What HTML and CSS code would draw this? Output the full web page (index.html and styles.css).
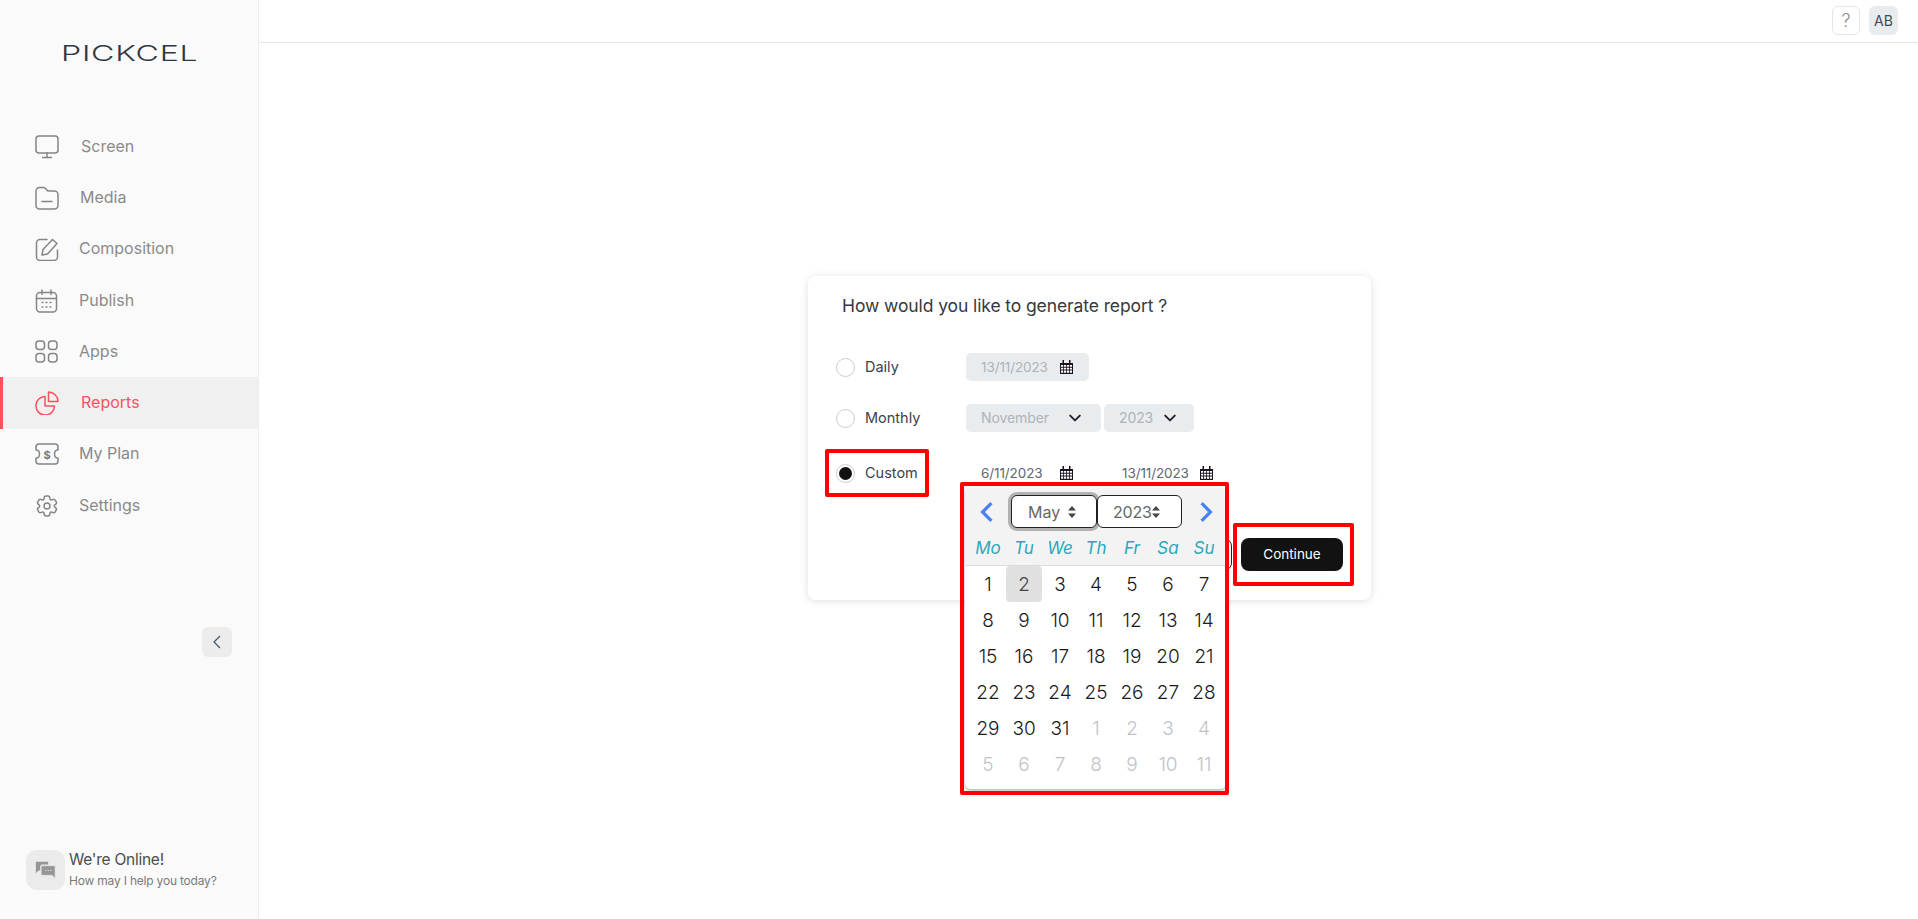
FILE: index.html
```html
<!DOCTYPE html>
<html lang="en">
<head>
<meta charset="utf-8">
<title>Pickcel Reports</title>
<link rel="stylesheet" href="styles.css">
</head>
<body>
<aside class="sidebar">
  <div class="logo"><span class="logo-word">PICKCEL</span></div>
  <nav class="nav">
    <a class="nav-item wide"><svg class="nav-icon" viewBox="0 0 24 24"><rect x="1" y="1" width="22" height="17" rx="3"/><path d="M12 18v4M7.500 22.500h9"/></svg>Screen</a>
    <a class="nav-item"><svg class="nav-icon media-icon" viewBox="0 0 24 24"><path d="M1 5a3.500 3.500 0 0 1 3.500-3.500h4c1.500 0 2 1 2.800 2 .8 1.200 1.500 1.500 2.700 1.500H19.500A3.500 3.500 0 0 1 23 8.500v11a3.500 3.500 0 0 1-3.500 3.500h-15A3.500 3.500 0 0 1 1 19.500z"/><path d="M7 15.500h10"/></svg>Media</a>
    <a class="nav-item"><svg class="nav-icon" viewBox="0 0 24 24"><path d="M12 2.500H5a3.500 3.500 0 0 0-3.500 3.500v14A3.500 3.500 0 0 0 5 23.500h14a3.500 3.500 0 0 0 3.500-3.500v-7"/><path d="M17.500 2.500l4.500 4-9.500 10.500-5.500 1 1-5.500z"/></svg>Composition</a>
    <a class="nav-item"><svg class="nav-icon" viewBox="0 0 24 24"><rect x="1.500" y="3.500" width="20" height="19.500" rx="3.500"/><path d="M1.500 9.500h20M7 1v4.500M16 1v4.500"/><path class="dots" d="M7 13.500h1M11 13.500h1M15 13.500h1M7 18h1M11 18h1M15 18h1"/></svg>Publish</a>
    <a class="nav-item"><svg class="nav-icon" viewBox="0 0 24 24"><rect x="1" y="1" width="8.500" height="8.500" rx="3"/><rect x="13.500" y="1" width="8.500" height="8.500" rx="3"/><rect x="1" y="13.500" width="8.500" height="8.500" rx="3"/><rect x="13.500" y="13.500" width="8.500" height="8.500" rx="3"/></svg>Apps</a>
    <a class="nav-item wide active"><svg class="nav-icon" viewBox="0 0 24 24"><path d="M10 5.500a9.300 9.300 0 1 0 9.500 9.500H10z"/><path d="M13.500 1v9.500H23A9.500 9.500 0 0 0 13.500 1z"/></svg>Reports</a>
    <a class="nav-item"><svg class="nav-icon" viewBox="0 0 24 24"><path d="M4 2h16a3 3 0 0 1 3 3v3c-2.500 0-3.500 2-3.500 4s1 4 3.500 4v3a3 3 0 0 1-3 3H4a3 3 0 0 1-3-3v-3c2.500 0 3.500-2 3.500-4S3.500 8 1 8V5a3 3 0 0 1 3-3z"/><text class="dollar" x="12" y="17" text-anchor="middle">$</text></svg>My Plan</a>
    <a class="nav-item"><svg class="nav-icon" viewBox="0 0 24 24"><circle cx="12" cy="12" r="3"/><path transform="rotate(90 12 12)" d="M2 12.880v-1.760c0-1.040.85-1.900 1.900-1.900 1.810 0 2.550-1.280 1.640-2.850-.52-.9-.21-2.070.7-2.590l1.730-.99c.79-.47 1.810-.19 2.280.6l.11.19c.9 1.570 2.380 1.570 3.290 0l.11-.19c.47-.79 1.490-1.070 2.280-.6l1.730.99c.91.52 1.220 1.690.7 2.590-.91 1.570-.17 2.850 1.640 2.850 1.040 0 1.900.85 1.900 1.900v1.760c0 1.040-.85 1.900-1.900 1.900-1.810 0-2.550 1.280-1.640 2.850.52.91.21 2.070-.7 2.590l-1.730.99c-.79.47-1.810.19-2.280-.6l-.11-.19c-.9-1.570-2.380-1.570-3.290 0l-.11.19c-.47.79-1.490 1.070-2.280.6l-1.730-.99a1.899 1.899 0 0 1-.7-2.590c.91-1.570.17-2.850-1.640-2.850-1.050 0-1.900-.86-1.900-1.900z"/></svg>Settings</a>
  </nav>
  <button class="collapse"><svg viewBox="0 0 12 16" class="collapse-icon"><path d="M9 2L3 8l6 6"/></svg></button>
  <div class="chat">
    <div class="chat-icon"><svg viewBox="0 0 24 24"><path class="bubble-back" d="M1 2h14v3H8a2 2 0 0 0-2 2v5H4l-3 3z"/><path class="bubble-front" d="M7 6.500h16v14.500l-3.500-3.500H7z"/><path class="bubble-dots" d="M11.500 12h1.200M14.500 12h1.200M17.500 12h1.200"/></svg></div>
    <div class="chat-text">
      <div class="chat-title">We're Online!</div>
      <div class="chat-sub">How may I help you today?</div>
    </div>
  </div>
</aside>
<div class="main">
  <header class="topbar">
    <button class="help">?</button>
    <div class="avatar">AB</div>
  </header>
  <section class="content">
    <div class="card">
      <h1 class="card-title">How would you like to generate report ?</h1>
      <div class="row row-daily">
        <label class="choice"><span class="radio"></span>Daily</label>
        <div class="field date-field disabled">13/11/2023<svg class="cal" viewBox="0 0 13 14"><use href="#cal-glyph"/></svg></div>
      </div>
      <div class="row row-monthly">
        <label class="choice"><span class="radio"></span>Monthly</label>
        <div class="field month-field disabled">November<svg class="chev" viewBox="0 0 10 6"><path d="M1 1l4 4 4-4"/></svg></div>
        <div class="field year-field disabled">2023<svg class="chev" viewBox="0 0 10 6"><path d="M1 1l4 4 4-4"/></svg></div>
      </div>
      <div class="row row-custom">
        <label class="choice"><span class="radio checked"></span>Custom</label>
        <div class="field date-field">6/11/2023<svg class="cal" viewBox="0 0 13 14"><use href="#cal-glyph"/></svg></div>
        <div class="field date-field date-to">13/11/2023<svg class="cal" viewBox="0 0 13 14"><use href="#cal-glyph"/></svg></div>
      </div>
      <div class="actions">
        <button class="btn btn-cancel"></button>
        <button class="btn btn-continue">Continue</button>
      </div>

      <div class="picker">
        <div class="picker-head">
          <div class="picker-nav">
            <svg class="arrow" viewBox="0 0 14 20"><path d="M11 2L3 10l8 8"/></svg>
            <div class="picker-selects">
              <div class="picker-select focused">May<svg class="updown" viewBox="0 0 8 12"><path d="M4 0l4 4.500H0zM4 12L0 7.500h8z"/></svg></div>
              <div class="picker-select year">2023<svg class="updown" viewBox="0 0 8 12"><path d="M4 0l4 4.500H0zM4 12L0 7.500h8z"/></svg></div>
            </div>
            <svg class="arrow" viewBox="0 0 14 20"><path d="M3 2l8 8-8 8"/></svg>
          </div>
          <div class="weekdays"><span>Mo</span><span>Tu</span><span>We</span><span>Th</span><span>Fr</span><span>Sa</span><span>Su</span></div>
        </div>
        <div class="days">
          <span>1</span><span class="selected">2</span><span>3</span><span>4</span><span>5</span><span>6</span><span>7</span>
          <span>8</span><span>9</span><span>10</span><span>11</span><span>12</span><span>13</span><span>14</span>
          <span>15</span><span>16</span><span>17</span><span>18</span><span>19</span><span>20</span><span>21</span>
          <span>22</span><span>23</span><span>24</span><span>25</span><span>26</span><span>27</span><span>28</span>
          <span>29</span><span>30</span><span>31</span><span class="muted">1</span><span class="muted">2</span><span class="muted">3</span><span class="muted">4</span>
          <span class="muted">5</span><span class="muted">6</span><span class="muted">7</span><span class="muted">8</span><span class="muted">9</span><span class="muted">10</span><span class="muted">11</span>
        </div>
      </div>

      <div class="mark mark-custom"></div>
      <div class="mark mark-picker"></div>
      <div class="mark mark-continue"></div>
    </div>
  </section>
</div>
<svg class="defs" width="0" height="0"><defs><g id="cal-glyph"><path d="M0 3h13v11H0z" fill="#1b1320"/><path d="M1 5h2.200v1.800H1zM4 5h2.200v1.800H4zM7 5h2.200v1.800H7zM10 5h2v1.800h-2zM1 7.800h2.200v1.800H1zM4 7.800h2.200v1.800H4zM7 7.800h2.200v1.800H7zM10 7.800h2v1.800h-2zM1 10.600h2.200v2.200H1zM4 10.600h2.200v2.200H4zM7 10.600h2.200v2.200H7zM10 10.600h2v2.200h-2z" fill="#fff"/><path d="M2.500 0h1.500v4H2.500zM9 0h1.500v4H9z" fill="#1b1320"/></g></defs></svg>
</body>
</html>
```
FILE: styles.css
```css
* { box-sizing: border-box; }
html, body { margin: 0; height: 100%; }
body {
  display: flex;
  height: 919px;
  overflow: hidden;
  background: #fff;
  font-family: Inter, "Open Sans", sans-serif;
  color: #333;
}
button { font-family: inherit; cursor: pointer; }

/* sidebar */
.sidebar {
  width: 259px;
  flex: none;
  display: flex;
  flex-direction: column;
  background: #fafafa;
  border-right: 1px solid #ececec;
}
.logo {
  height: 121px;
  padding: 41px 0 0 61px;
  font-size: 22px;
  line-height: 24px;
  font-weight: 300;
  letter-spacing: .5px;
  color: #2f383f;
  white-space: nowrap;
}
.logo-word { display: inline-block; transform: scaleX(1.46); transform-origin: left center; }
.nav { display: flex; flex-direction: column; }
.nav-item {
  height: 51.3px;
  display: flex;
  align-items: center;
  padding: 0 0 2px 35px;
  font-size: 16px;
  color: #8a8a8a;
}
.nav-icon {
  width: 24px;
  height: 24px;
  margin: 2px 20px 0 0;
  fill: none;
  stroke: #858585;
  stroke-width: 1.500;
  stroke-linecap: round;
  stroke-linejoin: round;
}
.nav-item.wide .nav-icon { margin-right: 22px; }
.media-icon { margin-right: 21px; }
.dots { stroke-width: 1.300; }
.dollar { font: 700 11px Inter, sans-serif; fill: #777; stroke: none; }
.nav-item.active {
  background: #f0f0f0;
  color: #f9525f;
  border-left: 3px solid #f9525f;
  padding-left: 32px;
}
.active .nav-icon { stroke: #f9525f; }
.collapse {
  align-self: flex-end;
  width: 30px;
  height: 30px;
  margin: 96px 26px 0 0;
  padding: 0;
  border: 0;
  border-radius: 6px;
  background: #ececec;
  display: flex;
  align-items: center;
  justify-content: center;
}
.collapse-icon { width: 12px; height: 16px; fill: none; stroke: #45525f; stroke-width: 1.200; }
.chat {
  margin-top: auto;
  margin-bottom: 28px;
  padding-left: 26px;
  display: flex;
  align-items: center;
  gap: 4px;
}
.chat-icon {
  width: 39px;
  height: 40px;
  border-radius: 11px;
  background: #ebebeb;
  display: flex;
  align-items: center;
  justify-content: center;
}
.chat-icon svg { width: 21px; height: 21px; }
.bubble-back, .bubble-front { fill: #959595; }
.bubble-front { stroke: #ebebeb; stroke-width: .8; }
.bubble-dots { stroke: #ebebeb; stroke-width: 1.200; fill: none; }
.chat-title { font-size: 15.500px; line-height: 22px; color: #4c4c4c; font-weight: 400; letter-spacing: -.25px; }
.chat-sub { font-size: 12px; line-height: 20px; color: #7a7a7a; letter-spacing: -.2px; }

/* top */
.main { flex: 1; min-width: 0; display: flex; flex-direction: column; }
.topbar {
  height: 43px;
  flex: none;
  display: flex;
  justify-content: flex-end;
  align-items: flex-start;
  gap: 9px;
  padding: 6px 20px 0 0;
  border-bottom: 1px solid #e6e6e6;
}
.help {
  width: 28px;
  height: 29px;
  padding: 0;
  background: #fff;
  border: 1px solid #e5e5e5;
  border-radius: 6px;
  color: #8e8e8e;
  font-size: 18px;
  font-weight: 300;
}
.avatar {
  width: 29px;
  height: 29px;
  border-radius: 6px;
  background: #e9ecef;
  color: #3f4a55;
  font-size: 14px;
  display: flex;
  align-items: center;
  justify-content: center;
}
.content { flex: 1; display: flex; justify-content: center; align-items: flex-start; padding: 233px 0 0 2px; }

/* card */
.card {
  position: relative;
  width: 563px;
  height: 324px;
  padding: 18px 0 0 28px;
  background: #fff;
  border-radius: 8px;
  box-shadow: 0 1px 8px rgba(0,0,0,.13);
}
.card-title {
  margin: 0 0 35px 6px;
  font-size: 17.500px;
  line-height: 24px;
  font-weight: 400;
  color: #343a40;
  letter-spacing: -.1px;
}
.row { display: flex; align-items: center; height: 28px; font-size: 14.500px; }
.row-monthly { margin-top: 23px; }
.row-custom { margin-top: 27px; }
.choice { width: 130px; display: flex; align-items: center; gap: 10px; color: #3b4249; padding-bottom: 2px; }
.radio {
  width: 19px;
  height: 19px;
  margin-top: 2px;
  border: 1px solid #c9ced6;
  border-radius: 50%;
  background: #fff;
  display: flex;
  align-items: center;
  justify-content: center;
}
.radio.checked::after {
  content: "";
  width: 13px;
  height: 13px;
  border-radius: 50%;
  background: #111;
}
.field {
  height: 28px;
  display: flex;
  align-items: center;
  justify-content: space-between;
  padding: 0 16px 1px 15px;
  border-radius: 5px;
  font-size: 13.500px;
  color: #5f666d;
  letter-spacing: -.1px;
}
.field.disabled { background: #e9ecef; color: #adb3b9; }
.date-field { width: 123px; }
.date-to { width: 121px; margin-left: 18px; padding-right: 15px; }
.month-field { width: 135px; font-size: 14px; padding-right: 20px; }
.year-field { width: 90px; margin-left: 3px; font-size: 14px; padding-right: 18px; }
.cal { width: 13px; height: 14px; }
.chev { width: 12px; height: 8px; fill: none; stroke: #212529; stroke-width: 1.600; stroke-linecap: round; stroke-linejoin: round; }

/* actions */
.actions { display: flex; justify-content: flex-end; gap: 9px; margin-top: 51px; padding-right: 28px; }
.btn { height: 33px; border-radius: 8px; font-size: 13.500px; }
.btn-cancel { width: 90px; background: #fff; border: 1px solid #222; color: #222; }
.btn-continue { width: 102px; padding-bottom: 2px; background: #121212; border: 0; color: #fff; font-weight: 400; }

/* date picker */
.picker {
  position: absolute;
  left: 157px;
  top: 212px;
  width: 261px;
  height: 301px;
  background: #fff;
  border-radius: 0 0 6px 6px;
  box-shadow: 0 2px 4px rgba(0,0,0,.3);
}
.picker-head { height: 78px; background: #f3f3f3; border-bottom: 1px solid #dcdcdc; }
.picker-nav { height: 47px; display: flex; align-items: flex-end; justify-content: space-between; padding: 0 11px 0 13px; }
.arrow { width: 18px; height: 22px; margin-bottom: 12px; fill: none; stroke: #4a82f0; stroke-width: 3; stroke-linejoin: miter; }
.picker-selects { display: flex; margin-bottom: 7px; }
.picker-select {
  width: 86px;
  height: 33px;
  display: flex;
  align-items: center;
  justify-content: space-between;
  padding: 0 20px 0 16px;
  background: #fff;
  border: 1px solid #222;
  border-radius: 6px;
  font-size: 16px;
  color: #666;
}
.picker-select.focused { box-shadow: 0 0 0 3px #b2b2b2; }
.picker-select.year { width: 85px; padding: 0 21px 0 15px; letter-spacing: -.2px; }
.updown { width: 8px; height: 12px; fill: #444; }
.weekdays, .days { display: grid; grid-template-columns: repeat(7, 36px); padding-left: 5px; }
.weekdays { height: 26px; align-items: center; text-align: center; font-size: 17px; font-style: italic; font-weight: 400; color: #2ca6bc; }
.days { grid-auto-rows: 36px; }
.days span {
  display: flex;
  align-items: center;
  justify-content: center;
  border-radius: 4px;
  font-size: 19px;
  font-weight: 300;
  color: #1a1a1a;
}
.days .selected { background: #e0e0e0; color: #444; }
.days .muted { color: #bfc3c9; }

/* annotation boxes */
.mark { position: absolute; border: 4px solid #ff0000; border-radius: 2px; pointer-events: none; }
.mark-custom { left: 17px; top: 173px; width: 104px; height: 48px; }
.mark-picker { left: 152px; top: 206px; width: 269px; height: 313px; }
.mark-continue { left: 425px; top: 247px; width: 121px; height: 63px; }
.defs { position: absolute; }
```
